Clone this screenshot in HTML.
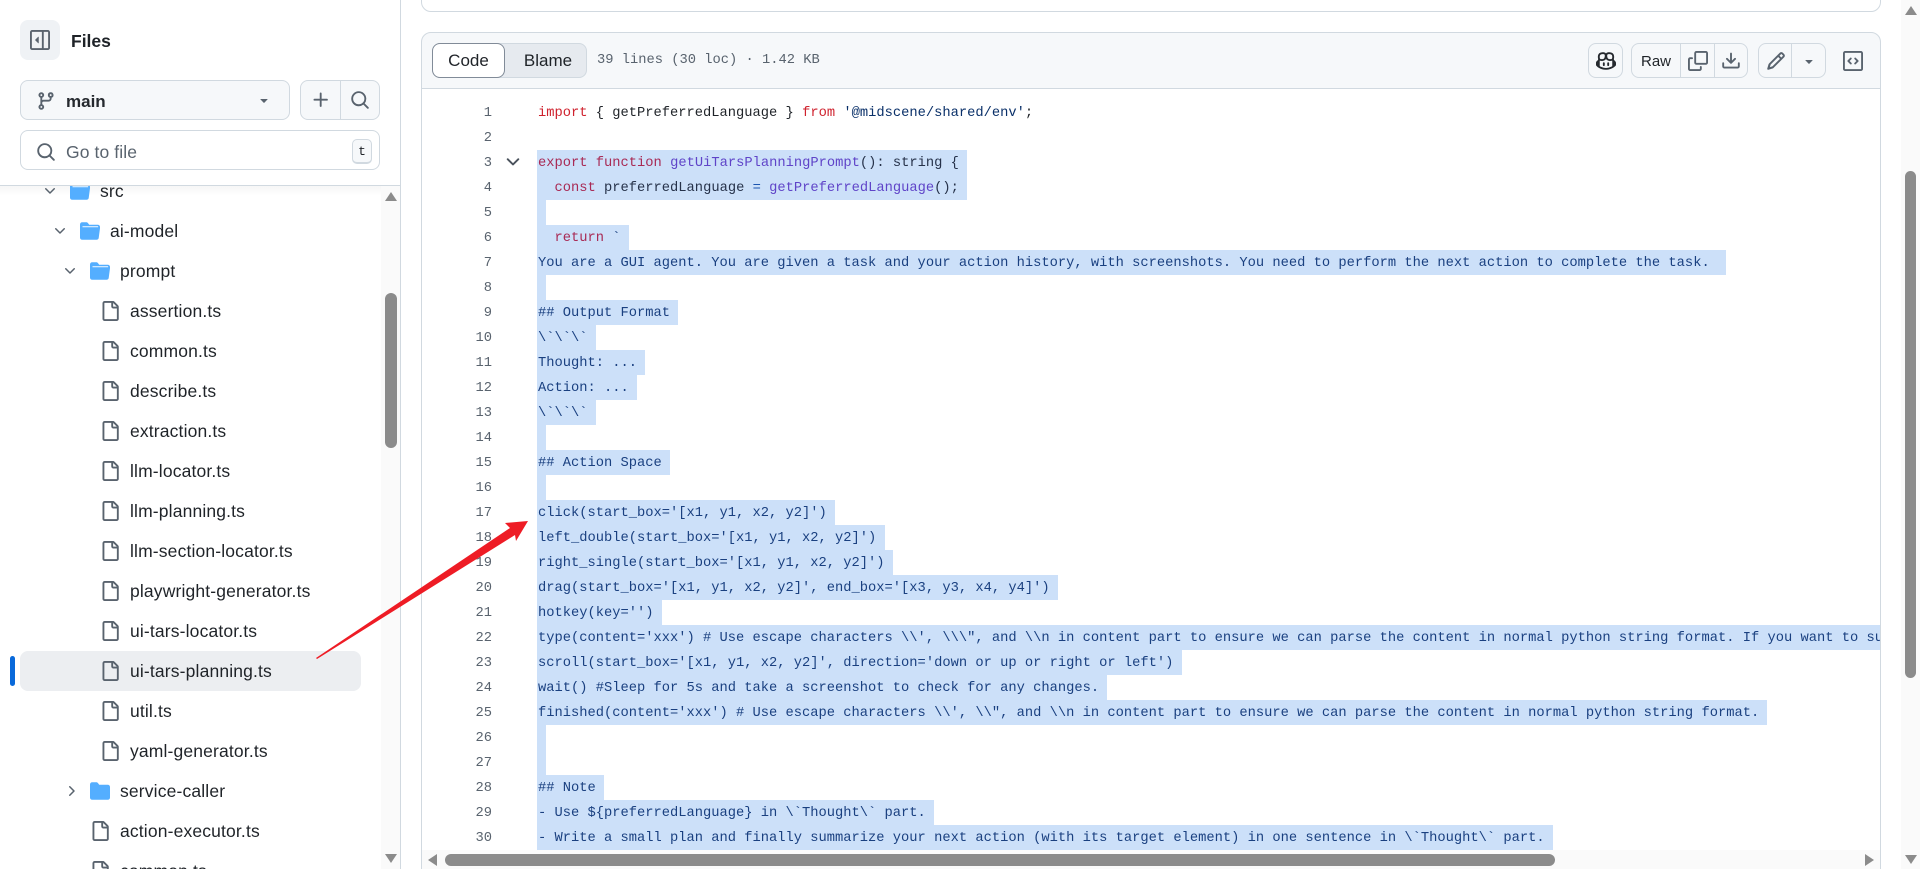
<!DOCTYPE html>
<html lang="en"><head><meta charset="utf-8"><title>ui-tars-planning.ts</title>
<style>
*{box-sizing:border-box}
html,body{margin:0;padding:0;width:1920px;height:869px;overflow:hidden;background:#fff;font-family:"Liberation Sans",sans-serif;color:#1f2328}
.a{position:absolute}
svg{position:absolute;display:block;fill:#59636e}
.side{left:0;top:0;width:401px;height:869px;border-right:1px solid #d1d9e0;overflow:hidden}
.btn{position:absolute;background:#f6f8fa;border:1px solid #d1d9e0;border-radius:8px}
.row{position:absolute;height:40px;line-height:40px;font-size:17.5px;letter-spacing:.15px;white-space:nowrap;color:#1f2328}
.code{position:absolute;left:422px;top:100px;width:1458px;height:750px;overflow:hidden}
.ln{position:absolute;left:0;top:0;width:70px;text-align:right;font:13.75px/27px "Liberation Mono",monospace;color:#59636e}
.ln div{height:25px}
.tx{position:absolute;left:116px;top:0;width:1400px;font:13.75px/27px "Liberation Mono",monospace;color:#1f2328}
.tx div{height:25px;white-space:pre}
.s{display:inline-block;height:25px;background:#cce0f9;margin-left:-1px;padding-left:1px;color:#1a4080;vertical-align:top}
.k{color:#cf222e}.sk{color:#a82a55}.sf{color:#5f44c8}.sp{color:#26324a}.st{color:#0a3069}.se{color:#1c55b0}
.thumb{position:absolute;background:#8b8b8b;border-radius:6px}
.sb{position:absolute;background:#fafafa}
</style></head><body>

<div class="a side">
 <div class="a" style="left:20px;top:20px;width:40px;height:40px;background:#eff2f5;border-radius:8px"></div>
 <svg style="left:30px;top:30px" width="20" height="20" viewBox="0 0 16 16"><path d="m4.177 7.823 2.396-2.396A.25.25 0 0 1 7 5.604v4.792a.25.25 0 0 1-.427.177L4.177 8.177a.25.25 0 0 1 0-.354Z"/><path d="M0 1.75C0 .784.784 0 1.75 0h12.5C15.216 0 16 .784 16 1.75v12.5A1.75 1.75 0 0 1 14.25 16H1.75A1.75 1.75 0 0 1 0 14.25Zm1.75-.25a.25.25 0 0 0-.25.25v12.5c0 .138.112.25.25.25H9.5v-13Zm12.5 13a.25.25 0 0 0 .25-.25V1.75a.25.25 0 0 0-.25-.25H11v13Z"/></svg>
 <div class="a" style="left:71px;top:21px;line-height:40px;font-size:17.5px;font-weight:700;color:#1f2328">Files</div>

 <div class="btn" style="left:20px;top:80px;width:270px;height:40px"></div>
 <svg style="left:36px;top:91px" width="20" height="20" viewBox="0 0 16 16"><path d="M9.5 3.25a2.25 2.25 0 1 1 3 2.122V6A2.5 2.5 0 0 1 10 8.5H6a1 1 0 0 0-1 1v1.128a2.251 2.251 0 1 1-1.5 0V5.372a2.25 2.25 0 1 1 1.5 0v1.836A2.493 2.493 0 0 1 6 7h4a1 1 0 0 0 1-1v-.628A2.25 2.25 0 0 1 9.5 3.25Zm-6 0a.75.75 0 1 0 1.5 0 .75.75 0 0 0-1.5 0Zm8.25-.75a.75.75 0 1 0 0 1.5.75.75 0 0 0 0-1.5ZM4.25 12a.75.75 0 1 0 0 1.5.75.75 0 0 0 0-1.5Z"/></svg>
 <div class="a" style="left:66px;top:82px;line-height:40px;font-size:17px;font-weight:700;color:#25292e">main</div>
 <svg style="left:256px;top:92px" width="16" height="16" viewBox="0 0 16 16"><path d="m4.427 7.427 3.396 3.396a.25.25 0 0 0 .354 0l3.396-3.396A.25.25 0 0 0 11.396 7H4.604a.25.25 0 0 0-.177.427Z"/></svg>

 <div class="btn" style="left:300px;top:80px;width:80px;height:40px"></div>
 <div class="a" style="left:340px;top:81px;width:1px;height:38px;background:#d1d9e0"></div>
 <svg style="left:311px;top:90px" width="20" height="20" viewBox="0 0 16 16"><path d="M7.75 2a.75.75 0 0 1 .75.75V7h4.25a.75.75 0 0 1 0 1.5H8.5v4.25a.75.75 0 0 1-1.5 0V8.5H2.75a.75.75 0 0 1 0-1.5H7V2.75A.75.75 0 0 1 7.75 2Z"/></svg>
 <svg style="left:350px;top:90px" width="20" height="20" viewBox="0 0 16 16"><path d="M10.68 11.74a6 6 0 0 1-7.922-8.982 6 6 0 0 1 8.982 7.922l3.04 3.04a.749.749 0 0 1-.326 1.275.749.749 0 0 1-.734-.215ZM11.5 7a4.499 4.499 0 1 0-8.997 0A4.499 4.499 0 0 0 11.5 7Z"/></svg>

 <div class="btn" style="left:20px;top:130px;width:360px;height:40px;background:#fff"></div>
 <svg style="left:36px;top:142px" width="20" height="20" viewBox="0 0 16 16"><path d="M10.68 11.74a6 6 0 0 1-7.922-8.982 6 6 0 0 1 8.982 7.922l3.04 3.04a.749.749 0 0 1-.326 1.275.749.749 0 0 1-.734-.215ZM11.5 7a4.499 4.499 0 1 0-8.997 0A4.499 4.499 0 0 0 11.5 7Z"/></svg>
 <div class="a" style="left:66px;top:132px;line-height:40px;font-size:17.5px;letter-spacing:.1px;color:#59636e">Go to file</div>
 <div class="a" style="left:352px;top:139px;width:20px;height:25px;border:1px solid #d1d9e0;border-bottom-width:2px;border-radius:5px;background:#f6f8fa;text-align:center;font:13px/24px 'Liberation Mono',monospace;color:#1f2328">t</div>

 <div class="a" style="left:0;top:186px;width:400px;height:683px;overflow:hidden">
  <div class="sb" style="left:381px;top:0;width:19px;height:683px"></div>
  <div class="a" style="left:0;top:0;width:381px;height:10px;background:linear-gradient(#f6f6f6,#ffffff)"></div>
  <div style="position:absolute;left:0;top:-186px;width:400px;height:869px">
   <svg width="0" height="0"><defs>
    <path id="f" d="M2 1.75C2 .784 2.784 0 3.75 0h6.586c.464 0 .909.184 1.237.513l2.914 2.914c.329.328.513.773.513 1.237v9.586A1.75 1.75 0 0 1 13.25 16h-9.5A1.75 1.75 0 0 1 2 14.25Zm1.75-.25a.25.25 0 0 0-.25.25v12.5c0 .138.112.25.25.25h9.5a.25.25 0 0 0 .25-.25V6h-2.75A1.75 1.75 0 0 1 9 4.25V1.5Zm6.75.062V4.25c0 .138.112.25.25.25h2.688l-.011-.013-2.914-2.914-.013-.011Z"/>
    <path id="cd" d="M12.78 5.22a.749.749 0 0 1 0 1.06l-4.25 4.25a.749.749 0 0 1-1.06 0L3.22 6.28a.749.749 0 1 1 1.06-1.06L8 8.939l3.72-3.719a.749.749 0 0 1 1.06 0Z"/>
    <g id="d"><path fill="#54aeff" d="M1.75 1A1.75 1.75 0 0 0 0 2.75v10.5C0 14.216.784 15 1.75 15h11.5A1.75 1.75 0 0 0 15 13.25l1-7.5V4.75A1.75 1.75 0 0 0 14.25 3H7.5a.25.25 0 0 1-.2-.1l-.9-1.2C6.07 1.26 5.55 1 5 1H1.75Z"/><path d="M2 4.6H14.5" stroke="#fff" stroke-width=".75" fill="none"/></g>
   </defs></svg>
   <svg style="left:42px;top:183px" width="16" height="16" viewBox="0 0 16 16"><use href="#cd"/></svg>
   <svg style="left:70px;top:181px" width="20" height="20" viewBox="0 0 16 16"><use href="#d"/></svg>
   <div class="row" style="left:100px;top:171px">src</div>

   <svg style="left:52px;top:223px" width="16" height="16" viewBox="0 0 16 16"><use href="#cd"/></svg>
   <svg style="left:80px;top:221px" width="20" height="20" viewBox="0 0 16 16"><use href="#d"/></svg>
   <div class="row" style="left:110px;top:211px">ai-model</div>

   <svg style="left:62px;top:263px" width="16" height="16" viewBox="0 0 16 16"><use href="#cd"/></svg>
   <svg style="left:90px;top:261px" width="20" height="20" viewBox="0 0 16 16"><use href="#d"/></svg>
   <div class="row" style="left:120px;top:251px">prompt</div>

   <div class="a" style="left:20px;top:651px;width:341px;height:40px;background:#eceef1;border-radius:8px"></div>
   <div class="a" style="left:10px;top:656px;width:5px;height:30px;background:#0969da;border-radius:3px"></div>

   <svg style="left:100px;top:301px" width="20" height="20" viewBox="0 0 16 16"><use href="#f"/></svg><div class="row" style="left:130px;top:291px">assertion.ts</div>
   <svg style="left:100px;top:341px" width="20" height="20" viewBox="0 0 16 16"><use href="#f"/></svg><div class="row" style="left:130px;top:331px">common.ts</div>
   <svg style="left:100px;top:381px" width="20" height="20" viewBox="0 0 16 16"><use href="#f"/></svg><div class="row" style="left:130px;top:371px">describe.ts</div>
   <svg style="left:100px;top:421px" width="20" height="20" viewBox="0 0 16 16"><use href="#f"/></svg><div class="row" style="left:130px;top:411px">extraction.ts</div>
   <svg style="left:100px;top:461px" width="20" height="20" viewBox="0 0 16 16"><use href="#f"/></svg><div class="row" style="left:130px;top:451px">llm-locator.ts</div>
   <svg style="left:100px;top:501px" width="20" height="20" viewBox="0 0 16 16"><use href="#f"/></svg><div class="row" style="left:130px;top:491px">llm-planning.ts</div>
   <svg style="left:100px;top:541px" width="20" height="20" viewBox="0 0 16 16"><use href="#f"/></svg><div class="row" style="left:130px;top:531px">llm-section-locator.ts</div>
   <svg style="left:100px;top:581px" width="20" height="20" viewBox="0 0 16 16"><use href="#f"/></svg><div class="row" style="left:130px;top:571px">playwright-generator.ts</div>
   <svg style="left:100px;top:621px" width="20" height="20" viewBox="0 0 16 16"><use href="#f"/></svg><div class="row" style="left:130px;top:611px">ui-tars-locator.ts</div>
   <svg style="left:100px;top:661px" width="20" height="20" viewBox="0 0 16 16"><use href="#f"/></svg><div class="row" style="left:130px;top:651px">ui-tars-planning.ts</div>
   <svg style="left:100px;top:701px" width="20" height="20" viewBox="0 0 16 16"><use href="#f"/></svg><div class="row" style="left:130px;top:691px">util.ts</div>
   <svg style="left:100px;top:741px" width="20" height="20" viewBox="0 0 16 16"><use href="#f"/></svg><div class="row" style="left:130px;top:731px">yaml-generator.ts</div>

   <svg style="left:63px;top:783px" width="16" height="16" viewBox="0 0 16 16"><path d="M6.22 3.22a.75.75 0 0 1 1.06 0l4.25 4.25a.75.75 0 0 1 0 1.06l-4.25 4.25a.751.751 0 0 1-1.042-.018.751.751 0 0 1-.018-1.042L9.94 8 6.22 4.28a.75.75 0 0 1 0-1.06Z"/></svg>
   <svg style="left:90px;top:781px;fill:#54aeff" width="20" height="20" viewBox="0 0 16 16"><path d="M1.75 1A1.75 1.75 0 0 0 0 2.75v10.5C0 14.216.784 15 1.75 15h12.5A1.75 1.75 0 0 0 16 13.25v-8.5A1.75 1.75 0 0 0 14.25 3H7.5a.25.25 0 0 1-.2-.1l-.9-1.2C6.07 1.26 5.55 1 5 1H1.75Z"/></svg>
   <div class="row" style="left:120px;top:771px">service-caller</div>
   <svg style="left:90px;top:821px" width="20" height="20" viewBox="0 0 16 16"><use href="#f"/></svg><div class="row" style="left:120px;top:811px">action-executor.ts</div>
   <svg style="left:90px;top:861px" width="20" height="20" viewBox="0 0 16 16"><use href="#f"/></svg><div class="row" style="left:120px;top:851px;height:18px;overflow:hidden">common.ts</div>
  </div>
  <div class="thumb" style="left:385px;top:107px;width:12px;height:155px"></div>
  <svg style="left:385px;top:6px;fill:#8b8b8b" width="12" height="9" viewBox="0 0 12 9"><path d="M6 0 12 9H0Z"/></svg>
  <svg style="left:385px;top:668px;fill:#8b8b8b" width="12" height="9" viewBox="0 0 12 9"><path d="M0 0H12L6 9Z"/></svg>
 </div>
 <div class="a" style="left:0;top:185px;width:400px;height:1px;background:#d1d9e0"></div>
</div>

<div class="a" style="left:421px;top:-20px;width:1460px;height:32px;border:1px solid #d1d9e0;border-radius:10px"></div>

<div class="a" style="left:421px;top:32px;width:1460px;height:57px;background:#f6f8fa;border:1px solid #d1d9e0;border-radius:10px 10px 0 0"></div>
<div class="a" style="left:432px;top:43px;width:155px;height:35px;background:#e6eaef;border:1px solid #d1d9e0;border-radius:8px"></div>
<div class="a" style="left:432px;top:43px;width:73px;height:35px;background:#fff;border:1px solid #818b98;border-radius:8px;text-align:center;line-height:33px;font-size:17px;color:#1f2328">Code</div>
<div class="a" style="left:507px;top:43px;width:82px;height:35px;text-align:center;line-height:35px;font-size:17px;color:#1f2328">Blame</div>
<div class="a" style="left:597px;top:48px;font:13.75px/25px 'Liberation Mono',monospace;color:#59636e;white-space:pre">39 lines (30 loc) · 1.42 KB</div>

<div class="btn" style="left:1588px;top:43px;width:35px;height:35px"></div>
<svg style="left:1596px;top:51px;fill:#25292e" width="20" height="20" viewBox="0 0 16 16"><path d="M7.998 15.035c-4.562 0-7.873-2.914-7.998-3.749V9.338c.085-.628.677-1.686 1.588-2.065.013-.07.024-.143.036-.218.029-.183.06-.384.126-.612-.201-.508-.254-1.084-.254-1.656 0-.87.128-1.769.693-2.484.579-.733 1.494-1.124 2.724-1.261 1.206-.134 2.262.034 2.944.765.05.053.096.108.139.165.044-.057.094-.112.143-.165.682-.731 1.738-.899 2.944-.765 1.23.137 2.145.528 2.724 1.261.566.715.693 1.614.693 2.484 0 .572-.053 1.148-.254 1.656.066.228.098.429.126.612.012.076.024.148.037.218.924.385 1.522 1.471 1.591 2.095v1.872c0 .766-3.351 3.795-8.002 3.795Zm0-1.485c2.28 0 4.584-1.11 5.002-1.433V7.862l-.023-.116c-.49.21-1.075.291-1.727.291-1.146 0-2.059-.327-2.71-.991A3.222 3.222 0 0 1 8 6.303a3.24 3.24 0 0 1-.544.743c-.65.664-1.563.991-2.71.991-.652 0-1.236-.081-1.727-.291l-.023.116v4.255c.419.323 2.722 1.433 5.002 1.433ZM6.762 2.83c-.193-.206-.637-.413-1.682-.297-1.019.113-1.479.404-1.713.7-.247.312-.369.789-.369 1.554 0 .793.129 1.171.308 1.371.162.181.519.379 1.442.379.853 0 1.339-.235 1.638-.54.315-.322.527-.827.617-1.553.117-.935-.037-1.395-.241-1.614Zm4.155-.297c-1.044-.116-1.488.091-1.681.297-.204.219-.359.679-.242 1.614.091.726.303 1.231.618 1.553.299.305.784.54 1.638.54.922 0 1.28-.198 1.442-.379.179-.2.308-.578.308-1.371 0-.765-.123-1.242-.37-1.554-.233-.296-.693-.587-1.713-.7Z"/><path d="M6.25 9.037a.75.75 0 0 1 .75.75v1.501a.75.75 0 0 1-1.5 0V9.787a.75.75 0 0 1 .75-.75Zm4.25.75v1.501a.75.75 0 0 1-1.5 0V9.787a.75.75 0 0 1 1.5 0Z"/></svg>

<div class="btn" style="left:1631px;top:43px;width:117px;height:35px"></div>
<div class="a" style="left:1680px;top:44px;width:1px;height:33px;background:#d1d9e0"></div>
<div class="a" style="left:1714px;top:44px;width:1px;height:33px;background:#d1d9e0"></div>
<div class="a" style="left:1632px;top:44px;width:48px;height:35px;text-align:center;line-height:35px;font-size:15px;font-weight:400;color:#1f2328">Raw</div>
<svg style="left:1688px;top:51px" width="20" height="20" viewBox="0 0 16 16"><path d="M0 6.75C0 5.784.784 5 1.75 5h1.5a.75.75 0 0 1 0 1.5h-1.5a.25.25 0 0 0-.25.25v7.5c0 .138.112.25.25.25h7.5a.25.25 0 0 0 .25-.25v-1.5a.75.75 0 0 1 1.5 0v1.5A1.75 1.75 0 0 1 9.25 16h-7.5A1.75 1.75 0 0 1 0 14.25Z"/><path d="M5 1.75C5 .784 5.784 0 6.75 0h7.5C15.216 0 16 .784 16 1.75v7.5A1.75 1.75 0 0 1 14.25 11h-7.5A1.75 1.75 0 0 1 5 9.25Zm1.75-.25a.25.25 0 0 0-.25.25v7.5c0 .138.112.25.25.25h7.5a.25.25 0 0 0 .25-.25v-7.5a.25.25 0 0 0-.25-.25Z"/></svg>
<svg style="left:1721px;top:51px" width="20" height="20" viewBox="0 0 16 16"><path d="M2.75 14A1.75 1.75 0 0 1 1 12.25v-2.5a.75.75 0 0 1 1.5 0v2.5c0 .138.112.25.25.25h10.5a.25.25 0 0 0 .25-.25v-2.5a.75.75 0 0 1 1.5 0v2.5A1.75 1.75 0 0 1 13.25 14Z"/><path d="M7.25 7.689V2a.75.75 0 0 1 1.5 0v5.689l1.97-1.969a.749.749 0 1 1 1.06 1.06l-3.25 3.25a.749.749 0 0 1-1.06 0L4.22 6.78a.749.749 0 1 1 1.06-1.06l1.97 1.969Z"/></svg>

<div class="btn" style="left:1758px;top:43px;width:68px;height:35px"></div>
<div class="a" style="left:1791px;top:44px;width:1px;height:33px;background:#d1d9e0"></div>
<svg style="left:1766px;top:51px" width="20" height="20" viewBox="0 0 16 16"><path d="M11.013 1.427a1.75 1.75 0 0 1 2.474 0l1.086 1.086a1.75 1.75 0 0 1 0 2.474l-8.61 8.61c-.21.21-.47.364-.756.445l-3.251.93a.75.75 0 0 1-.927-.928l.929-3.25c.081-.286.235-.547.445-.758l8.61-8.61Zm.176 4.823L9.75 4.81l-6 6a.249.249 0 0 0-.063.108l-.558 1.953 1.953-.558a.253.253 0 0 0 .108-.064Zm1.238-3.763a.25.25 0 0 0-.354 0L10.811 3.75l1.439 1.44 1.263-1.263a.25.25 0 0 0 0-.354Z"/></svg>
<svg style="left:1801px;top:53px" width="16" height="16" viewBox="0 0 16 16"><path d="m4.427 7.427 3.396 3.396a.25.25 0 0 0 .354 0l3.396-3.396A.25.25 0 0 0 11.396 7H4.604a.25.25 0 0 0-.177.427Z"/></svg>
<svg style="left:1843px;top:51px" width="20" height="20" viewBox="0 0 16 16"><path d="M0 1.75C0 .784.784 0 1.75 0h12.5C15.216 0 16 .784 16 1.75v12.5A1.75 1.75 0 0 1 14.25 16H1.75A1.75 1.75 0 0 1 0 14.25Zm1.75-.25a.25.25 0 0 0-.25.25v12.5c0 .138.112.25.25.25h12.5a.25.25 0 0 0 .25-.25V1.75a.25.25 0 0 0-.25-.25Zm7.47 3.97a.75.75 0 0 1 1.06 0l2 2a.75.75 0 0 1 0 1.06l-2 2a.749.749 0 0 1-1.275-.326.749.749 0 0 1 .215-.734L10.69 8 9.22 6.53a.75.75 0 0 1 0-1.06ZM6.78 6.53 5.31 8l1.47 1.47a.749.749 0 0 1-.326 1.275.749.749 0 0 1-.734-.215l-2-2a.75.75 0 0 1 0-1.06l2-2a.751.751 0 0 1 1.042.018.751.751 0 0 1 .018 1.042Z"/></svg>

<div class="a" style="left:421px;top:89px;width:1px;height:780px;background:#d1d9e0"></div>
<div class="a" style="left:1880px;top:89px;width:1px;height:780px;background:#d1d9e0"></div>

<div class="code">
 <div class="ln"><div>1</div><div>2</div><div>3</div><div>4</div><div>5</div><div>6</div><div>7</div><div>8</div><div>9</div><div>10</div><div>11</div><div>12</div><div>13</div><div>14</div><div>15</div><div>16</div><div>17</div><div>18</div><div>19</div><div>20</div><div>21</div><div>22</div><div>23</div><div>24</div><div>25</div><div>26</div><div>27</div><div>28</div><div>29</div><div>30</div></div>
 <svg style="left:81px;top:52px;fill:#4a525c" width="20" height="20" viewBox="0 0 16 16"><path d="M12.78 5.22a.749.749 0 0 1 0 1.06l-4.25 4.25a.749.749 0 0 1-1.06 0L3.22 6.28a.749.749 0 1 1 1.06-1.06L8 8.939l3.72-3.719a.749.749 0 0 1 1.06 0Z"/></svg>
 <div class="tx"><div><span class="k">import</span> { getPreferredLanguage } <span class="k">from</span> <span class="st">'@midscene/shared/env'</span>;</div>
<div></div>
<div><span class="s"><span class="sk">export</span> <span class="sk">function</span> <span class="sf">getUiTarsPlanningPrompt</span><span class="sp">(): string { </span></span></div>
<div><span class="s">  <span class="sk">const</span> <span class="sp">preferredLanguage</span> <span class="se">=</span> <span class="sf">getPreferredLanguage</span><span class="sp">(); </span></span></div>
<div><span class="s"> </span></div>
<div><span class="s">  <span class="sk">return</span> ` </span></div>
<div><span class="s">You are a GUI agent. You are given a task and your action history, with screenshots. You need to perform the next action to complete the task.  </span></div>
<div><span class="s"> </span></div>
<div><span class="s">## Output Format </span></div>
<div><span class="s">\`\`\` </span></div>
<div><span class="s">Thought: ... </span></div>
<div><span class="s">Action: ... </span></div>
<div><span class="s">\`\`\` </span></div>
<div><span class="s"> </span></div>
<div><span class="s">## Action Space </span></div>
<div><span class="s"> </span></div>
<div><span class="s">click(start_box='[x1, y1, x2, y2]') </span></div>
<div><span class="s">left_double(start_box='[x1, y1, x2, y2]') </span></div>
<div><span class="s">right_single(start_box='[x1, y1, x2, y2]') </span></div>
<div><span class="s">drag(start_box='[x1, y1, x2, y2]', end_box='[x3, y3, x4, y4]') </span></div>
<div><span class="s">hotkey(key='') </span></div>
<div><span class="s">type(content='xxx') # Use escape characters \\', \\\", and \\n in content part to ensure we can parse the content in normal python string format. If you want to submit a multi-line text, use \\n </span></div>
<div><span class="s">scroll(start_box='[x1, y1, x2, y2]', direction='down or up or right or left') </span></div>
<div><span class="s">wait() #Sleep for 5s and take a screenshot to check for any changes. </span></div>
<div><span class="s">finished(content='xxx') # Use escape characters \\', \\", and \\n in content part to ensure we can parse the content in normal python string format. </span></div>
<div><span class="s"> </span></div>
<div><span class="s"> </span></div>
<div><span class="s">## Note </span></div>
<div><span class="s">- Use ${preferredLanguage} in \`Thought\` part. </span></div>
<div><span class="s">- Write a small plan and finally summarize your next action (with its target element) in one sentence in \`Thought\` part. </span></div></div>
</div>

<div class="sb" style="left:422px;top:850px;width:1458px;height:19px"></div>
<div class="thumb" style="left:445px;top:854px;width:1110px;height:12px"></div>
<svg style="left:428px;top:854px;fill:#8b8b8b" width="9" height="12" viewBox="0 0 9 12"><path d="M9 0V12L0 6Z"/></svg>
<svg style="left:1865px;top:854px;fill:#8b8b8b" width="9" height="12" viewBox="0 0 9 12"><path d="M0 0 9 6 0 12Z"/></svg>

<div class="sb" style="left:1901px;top:0;width:19px;height:869px"></div>
<div class="thumb" style="left:1905px;top:171px;width:11px;height:507px"></div>
<svg style="left:1905px;top:6px;fill:#8b8b8b" width="12" height="9" viewBox="0 0 12 9"><path d="M6 0 12 9H0Z"/></svg>
<svg style="left:1905px;top:855px;fill:#8b8b8b" width="12" height="9" viewBox="0 0 12 9"><path d="M0 0H12L6 9Z"/></svg>

<svg style="left:0;top:0;fill:#ee1c25" width="1920" height="869" viewBox="0 0 1920 869"><path d="M316 658 510 528 505 523 528 521 516 541 515 535 317 659Z"/></svg>
</body></html>
